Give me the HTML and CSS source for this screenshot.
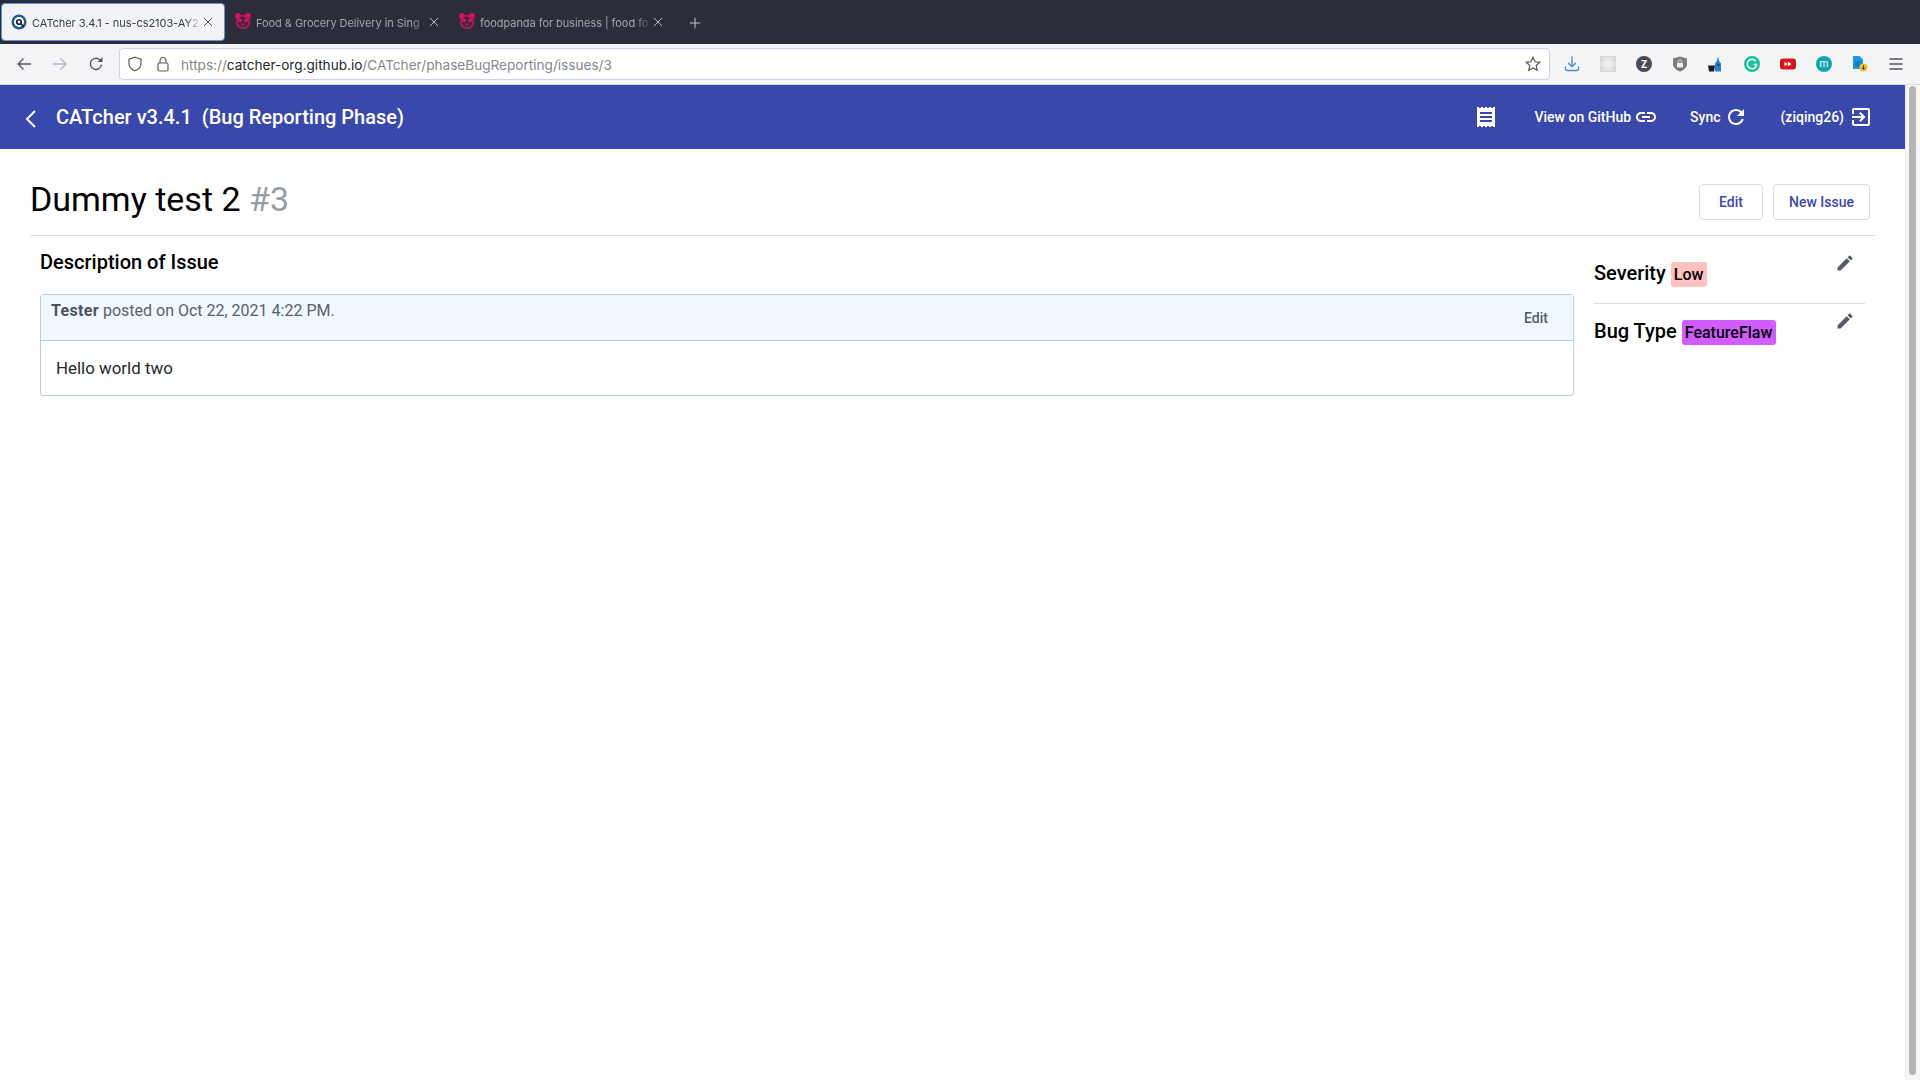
FILE: index.html
```html
<!DOCTYPE html>
<html lang="en">
<head>
  <meta charset="UTF-8" />
  <title>CATcher 3.4.1 - nus-cs2103-AY2122S1</title>
  <link rel="stylesheet" href="styles.css">
</head>
<body>

  <!-- Browser tabs -->
  <div class="tabstrip">
    <div class="tab tab-active">
      <svg class="favicon" viewBox="0 0 16 16"><circle cx="8" cy="8" r="7.5" fill="#1f5f8b"/><circle cx="8" cy="8" r="5" fill="#fff"/><circle cx="8" cy="8" r="3.1" fill="#16202c"/><circle cx="8" cy="8" r="1.4" fill="#fff"/><path d="M10 10l3 3" stroke="#16202c" stroke-width="1.6"/></svg>
      <span class="tab-title">CATcher 3.4.1 - nus-cs2103-AY2</span>
      <svg class="tab-close" viewBox="0 0 12 12"><path d="M2 2l8 8M10 2l-8 8"/></svg>
    </div>
    <div class="tab">
      <svg class="favicon favicon-panda" viewBox="0 0 16 16"><use href="#panda"/></svg>
      <span class="tab-title">Food &amp; Grocery Delivery in Sing</span>
      <svg class="tab-close" viewBox="0 0 12 12"><path d="M2 2l8 8M10 2l-8 8"/></svg>
    </div>
    <div class="tab">
      <svg class="favicon favicon-panda" viewBox="0 0 16 16"><use href="#panda"/></svg>
      <span class="tab-title">foodpanda for business | food fo</span>
      <svg class="tab-close" viewBox="0 0 12 12"><path d="M2 2l8 8M10 2l-8 8"/></svg>
    </div>
    <svg class="new-tab" viewBox="0 0 14 14"><path d="M7 1v12M1 7h12"/></svg>
  </div>

  <!-- Browser toolbar -->
  <div class="toolbar">
    <svg class="nav-icon nav-back" viewBox="0 0 16 16"><path d="M15 8H2M7.5 2.5L2 8l5.500 5.500"/></svg>
    <svg class="nav-icon nav-forward" viewBox="0 0 16 16"><path d="M1 8h13M8.500 2.500L14 8l-5.500 5.500"/></svg>
    <svg class="nav-icon nav-reload" viewBox="0 0 16 16"><path d="M13.500 8.500A5.600 5.600 0 1 1 11.800 3.800"/><path class="solid" d="M14.500 1v5h-5z"/></svg>
    <div class="urlbar">
      <svg class="url-icon" viewBox="0 0 16 16"><path d="M8 1.200l6 1.900v4.400c0 3.600-2.500 6-6 7.300-3.500-1.300-6-3.700-6-7.300V3.100z"/></svg>
      <svg class="url-icon" viewBox="0 0 16 16"><rect x="3" y="7" width="10" height="8" rx="1.500"/><path d="M5 7V4.500a3 3 0 0 1 6 0V7"/></svg>
      <span class="url"><span class="url-dim">https://</span>catcher-org.github.io<span class="url-dim">/CATcher/phaseBugReporting/issues/3</span></span>
      <svg class="url-star" viewBox="0 0 16 16"><path d="M8 1.300l2 4.500 4.800.5-3.600 3.200 1 4.800L8 11.900l-4.200 2.400 1-4.800L1.200 6.300 6 5.800z"/></svg>
    </div>
    <div class="extensions">
      <svg class="ext" viewBox="0 0 16 16" fill="none" stroke="#4a8ce8" stroke-width="1.400" stroke-linecap="round"><path d="M8 1v9.500M4.500 7.200L8 10.700l3.500-3.500M1.500 11v1.500a2 2 0 0 0 2 2h9a2 2 0 0 0 2-2V11"/></svg>
      <svg class="ext" viewBox="0 0 16 16"><rect width="16" height="16" fill="#d9d9d9"/><g fill="none" stroke="#f4f4f4" stroke-width="1"><ellipse cx="8" cy="8" rx="6.500" ry="2.600"/><ellipse cx="8" cy="8" rx="6.500" ry="2.600" transform="rotate(60 8 8)"/><ellipse cx="8" cy="8" rx="6.500" ry="2.600" transform="rotate(120 8 8)"/></g><circle cx="8" cy="8" r="1.400" fill="#f4f4f4"/></svg>
      <svg class="ext" viewBox="0 0 16 16"><circle cx="8" cy="8" r="8" fill="#4a4a55"/><text x="8" y="11.600" class="ext-letter">Z</text></svg>
      <svg class="ext" viewBox="0 0 16 16"><path d="M8 .5l7 2v5.500c0 3.500-3 6.300-7 7.500-4-1.200-7-4-7-7.500V2.500z" fill="#7b7b7b"/><rect x="5" y="7" width="6" height="4.500" rx=".6" fill="#eee"/><path d="M6.200 7V5.600a1.800 1.800 0 0 1 3.600 0V7" fill="none" stroke="#eee"/></svg>
      <svg class="ext" viewBox="0 0 16 16"><path d="M0 9.500h7l-1 6H1z" fill="#1b1b1b"/><path d="M7 15.500V7.500l1.800-2.500L10 .5l1.200 4.500 1.800 2.500v8z" fill="#2c7fd0"/><rect x="9" y="8" width="2.500" height="2" fill="#15476f"/></svg>
      <svg class="ext" viewBox="0 0 16 16"><circle cx="8" cy="8" r="8" fill="#15c39a"/><path d="M11.800 5.200A4.700 4.700 0 1 0 12.700 8.500H9.500" fill="none" stroke="#fff" stroke-width="1.500"/></svg>
      <svg class="ext" viewBox="0 0 16 16"><rect y="2.500" width="16" height="11" rx="3" fill="#d9161c"/><path d="M4.500 5.700L8 8l-3.500 2.300zM8 5.700L11.500 8 8 10.300z" fill="#fff"/></svg>
      <svg class="ext" viewBox="0 0 16 16"><circle cx="8" cy="8" r="8" fill="#10a5ad"/><text x="8" y="11.400" class="ext-letter ext-letter-thin">m</text></svg>
      <svg class="ext" viewBox="0 0 16 16"><path d="M1 0h6.500L11 3.500V13H1z" fill="#1e96e8"/><path d="M3 6h6M3 8h6M3 10h4" stroke="#0c5f9e" stroke-width="1"/><circle cx="11.500" cy="11.500" r="4" fill="#f5c518"/><path d="M11.500 9v4M9.800 11.500l1.700 1.800 1.700-1.800" fill="none" stroke="#333" stroke-width="1"/></svg>
      <svg class="ext ext-menu" viewBox="0 0 16 16"><path d="M1.500 3h13M1.500 8h13M1.500 13h13"/></svg>
    </div>
  </div>

  <div class="viewport">
    <div class="page">

      <!-- App header -->
      <header class="app-header">
        <svg class="back-icon" viewBox="0 0 12 20"><path d="M10 2L2 10l8 8"/></svg>
        <span class="app-title">CATcher v3.4.1 &nbsp;(Bug Reporting Phase)</span>
        <div class="header-actions">
          <svg class="log-icon" viewBox="0 0 18 20"><path d="M0 1h18v18H0z" fill="#fff"/><path d="M0 .5h18M0 19.500h18" stroke="#fff" stroke-width="1" stroke-dasharray="2 2"/><path d="M3 6h12M3 10h12M3 14h12" stroke="#3949ab" stroke-width="2"/></svg>
          <span class="header-link link-github">View on GitHub
            <svg class="header-icon" viewBox="0 0 24 24"><path d="M3.900 12c0-1.710 1.390-3.100 3.100-3.100h4V7H7c-2.760 0-5 2.240-5 5s2.240 5 5 5h4v-1.900H7c-1.710 0-3.100-1.390-3.100-3.100zM8 13h8v-2H8v2zm9-6h-4v1.900h4c1.710 0 3.100 1.390 3.100 3.100s-1.390 3.100-3.100 3.100h-4V17h4c2.760 0 5-2.240 5-5s-2.240-5-5-5z"/></svg>
          </span>
          <span class="header-link link-sync">Sync
            <svg class="header-icon" viewBox="0 0 24 24"><path d="M17.650 6.350C16.200 4.900 14.210 4 12 4c-4.420 0-7.990 3.580-7.990 8s3.570 8 7.990 8c3.730 0 6.840-2.550 7.730-6h-2.080c-.82 2.330-3.040 4-5.650 4-3.310 0-6-2.690-6-6s2.690-6 6-6c1.660 0 3.140.69 4.220 1.780L13 11h7V4l-2.350 2.350z"/></svg>
          </span>
          <span class="header-link link-user">(ziqing26)
            <svg class="header-icon" viewBox="0 0 24 24"><path d="M10.090 15.590L11.500 17l5-5-5-5-1.410 1.410L12.670 11H3v2h9.670l-2.580 2.590zM19 3H5c-1.110 0-2 .9-2 2v4h2V5h14v14H5v-4H3v4c0 1.100.89 2 2 2h14c1.100 0 2-.9 2-2V5c0-1.100-.9-2-2-2z"/></svg>
          </span>
        </div>
      </header>

      <main class="issue">
        <div class="issue-head">
          <h1 class="issue-title">Dummy test 2 <span class="issue-number">#3</span></h1>
          <div class="issue-buttons">
            <button class="stroked-btn btn-edit">Edit</button>
            <button class="stroked-btn btn-new">New Issue</button>
          </div>
        </div>

        <div class="issue-body">
          <section class="description">
            <h2 class="section-title">Description of Issue</h2>
            <div class="comment">
              <div class="comment-head">
                <span class="comment-meta"><strong>Tester</strong> posted on Oct 22, 2021 4:22 PM.</span>
                <button class="comment-edit">Edit</button>
              </div>
              <div class="comment-text">Hello world two</div>
            </div>
          </section>

          <aside class="sidebar">
            <div class="side-row">
              <div class="side-label">Severity <span class="chip chip-low">Low</span></div>
              <svg class="pencil" viewBox="0 0 24 24"><path d="M3 17.250V21h3.750L17.810 9.940l-3.750-3.750L3 17.250zM20.710 7.040c.39-.39.39-1.020 0-1.410l-2.340-2.340c-.39-.39-1.020-.39-1.410 0l-1.830 1.830 3.750 3.750 1.830-1.830z"/></svg>
            </div>
            <div class="side-row">
              <div class="side-label">Bug Type <span class="chip chip-flaw">FeatureFlaw</span></div>
              <svg class="pencil" viewBox="0 0 24 24"><path d="M3 17.250V21h3.750L17.810 9.940l-3.750-3.750L3 17.250zM20.710 7.040c.39-.39.39-1.020 0-1.410l-2.340-2.340c-.39-.39-1.020-.39-1.410 0l-1.830 1.830 3.750 3.750 1.830-1.830z"/></svg>
            </div>
          </aside>
        </div>
      </main>
    </div>

    <div class="scrolltrack"><div class="scrollthumb"></div></div>
  </div>

  <svg class="defs" width="0" height="0">
    <symbol id="panda" viewBox="0 0 16 16">
      <circle cx="3" cy="3" r="3" fill="#d70f64"/><circle cx="13" cy="3" r="3" fill="#d70f64"/>
      <circle cx="8" cy="9" r="6.200" fill="#2b2e38" stroke="#d70f64" stroke-width="1.500"/>
      <ellipse cx="5" cy="7.500" rx="2.200" ry="2" fill="#d70f64"/><ellipse cx="11" cy="7.500" rx="2.200" ry="2" fill="#d70f64"/>
      <path d="M5.800 10.500h4.400L8 13.500z" fill="#d70f64"/>
    </symbol>
  </svg>
</body>
</html>
```

FILE: styles.css
```css
html, body {
  height: 100%;
  margin: 0;
  padding: 0;
  overflow: hidden;
  background: #fff;
  font-family: Roboto, "Liberation Sans", sans-serif;
  color: #000;
}

body {
  display: flex;
  flex-direction: column;
}

.defs {
  position: absolute;
}

/* Browser tabs */
.tabstrip {
  height: 44px;
  flex: none;
  display: flex;
  align-items: center;
  padding-left: 1px;
  box-sizing: border-box;
  background: #2b2e38;
  font-family: Inter, "Noto Sans", sans-serif;
}

.tab {
  width: 224px;
  height: 38px;
  box-sizing: border-box;
  display: flex;
  align-items: center;
  padding: 0 10px 0 9px;
  border-radius: 4px;
  color: #a4a6ad;
  font-size: 11px;
  letter-spacing: -.05px;
}

.tab-active {
  background: #f2f3f6;
  border: 1px solid #5b93d6;
  color: #3a3d46;
  margin-right: 1px;
}

.favicon {
  width: 16px;
  height: 16px;
  flex: none;
  margin-right: 5px;
}

.favicon-panda {
  margin-top: -2px;
}

.tab-title {
  flex: 1;
  min-width: 0;
  padding-top: 1px;
  white-space: nowrap;
  -webkit-mask-image: linear-gradient(to right, #000 90%, transparent);
  mask-image: linear-gradient(to right, #000 90%, transparent);
}

.tab-close {
  width: 12px;
  height: 12px;
  flex: none;
  fill: none;
  stroke: #b8bac0;
  stroke-width: 1;
}

.tab-active .tab-close {
  stroke: #4c4f58;
}

.new-tab {
  width: 12px;
  height: 12px;
  margin: 1px 0 0 15px;
  fill: none;
  stroke: #c4c6cb;
  stroke-width: 1.2;
}

/* Browser toolbar */
.toolbar {
  height: 41px;
  flex: none;
  display: flex;
  align-items: center;
  box-sizing: border-box;
  padding: 0 0 1px 16px;
  background: #f3f4f6;
  border-bottom: 1px solid #dcdde2;
  font-family: Inter, "Noto Sans", sans-serif;
}

.nav-icon {
  width: 16px;
  height: 16px;
  flex: none;
  fill: none;
  stroke: #54565e;
  stroke-width: 1.300;
  margin-right: 20px;
}

.nav-forward {
  stroke: #b4b6bb;
}

.nav-reload {
  margin-right: 15px;
}

.nav-icon .solid {
  fill: #54565e;
  stroke: none;
}

.urlbar {
  width: 1431px;
  height: 32px;
  flex: none;
  box-sizing: border-box;
  display: flex;
  align-items: center;
  padding: 0 8px 0 7px;
  background: #fff;
  border: 1px solid #c9d2e8;
  border-radius: 4px;
}

.url-icon {
  width: 16px;
  height: 16px;
  flex: none;
  fill: none;
  stroke: #5a5c64;
  stroke-width: 1.200;
  margin-right: 12px;
}

.url {
  flex: 1;
  margin-left: -2px;
  padding-top: 2px;
  font-size: 13.600px;
  color: #24262c;
  white-space: nowrap;
}

.url-dim {
  color: #85878e;
}

.url-star {
  width: 16px;
  height: 16px;
  fill: none;
  stroke: #54565e;
  stroke-width: 1.200;
}

.extensions {
  display: flex;
  align-items: center;
  gap: 20px;
  margin-left: 14px;
}

.ext {
  width: 16px;
  height: 16px;
  flex: none;
}

.ext-letter {
  fill: #fff;
  font-family: Roboto, sans-serif;
  font-size: 10px;
  font-weight: 700;
  text-anchor: middle;
}

.ext-letter-thin {
  font-weight: 400;
}

.ext-menu {
  fill: none;
  stroke: #54565e;
  stroke-width: 1.300;
}

/* Page area */
.viewport {
  flex: 1;
  display: flex;
  min-height: 0;
}

.page {
  flex: 1;
  min-width: 0;
}

.scrolltrack {
  width: 15px;
  flex: none;
  box-sizing: border-box;
  padding: 1px 4px 5px 3px;
  background: #f7f7f7;
  border-left: 1px solid #eaeaea;
}

.scrollthumb {
  height: 100%;
  background: #b5b5b5;
  border-radius: 4px;
}

/* App header */
.app-header {
  height: 64px;
  display: flex;
  align-items: center;
  padding: 0 32px 0 25px;
  box-sizing: border-box;
  background: #3949ab;
  color: #fff;
}

.back-icon {
  width: 12px;
  height: 20px;
  margin: 4px 19px 0 0;
  fill: none;
  stroke: #fff;
  stroke-width: 2;
}

.app-title {
  font-size: 20px;
  font-weight: 500;
}

.header-actions {
  margin-left: auto;
  display: flex;
  align-items: center;
}

.log-icon {
  width: 18px;
  height: 20px;
  margin-right: 40px;
}

.header-link {
  display: flex;
  align-items: center;
  font-size: 14px;
  font-weight: 500;
}

.link-github {
  gap: 3px;
  margin-right: 32px;
}

.link-sync {
  gap: 3px;
  margin-right: 33px;
}

.link-user {
  gap: 5px;
}

.header-icon {
  width: 24px;
  height: 24px;
  fill: #fff;
}

/* Issue */
.issue {
  padding: 0 30px;
}

.issue-head {
  height: 87px;
  box-sizing: border-box;
  display: flex;
  align-items: flex-end;
  justify-content: space-between;
  padding: 0 5px 15px 0;
  border-bottom: 1px solid #dcdcdc;
}

.issue-title {
  margin: 0 0 1px;
  font-size: 34px;
  font-weight: 400;
}

.issue-number {
  color: #959da5;
  font-weight: 400;
}

.issue-buttons {
  display: flex;
  gap: 10px;
}

.stroked-btn {
  height: 36px;
  padding: 0 15px;
  background: #fff;
  border: 1px solid #dcdcdc;
  border-radius: 4px;
  font-family: Roboto, sans-serif;
  font-size: 14px;
  font-weight: 500;
  color: #3949ab;
}

.btn-edit {
  width: 64px;
}

.btn-new {
  width: 97px;
}

.issue-body {
  display: flex;
  padding: 0 10px;
}

.description {
  flex: 1;
  min-width: 0;
}

.section-title {
  margin: 13px 0 19px;
  font-size: 20px;
  font-weight: 500;
  line-height: 26px;
}

.comment {
  border: 1px solid #b5cde8;
  border-radius: 3px;
}

.comment-head {
  height: 46px;
  box-sizing: border-box;
  display: flex;
  justify-content: space-between;
  padding: 6px 25px 0 10px;
  background: #f1f8ff;
  border-bottom: 1px solid #b5cde8;
  color: #586069;
  font-size: 16px;
}

.comment-meta strong {
  font-weight: 700;
  color: #4c545c;
  letter-spacing: .33px;
}

.comment-edit {
  height: 24px;
  padding: 0;
  margin-top: 5px;
  background: none;
  border: none;
  font-family: Roboto, sans-serif;
  font-size: 14px;
  font-weight: 500;
  color: #565c66;
}

.comment-text {
  height: 54px;
  box-sizing: border-box;
  padding: 17px 15px 0;
  font-size: 16.900px;
  color: #24292e;
}

.sidebar {
  width: 271px;
  flex: none;
  margin-left: 20px;
  padding-top: 9px;
}

.side-row {
  height: 59px;
  box-sizing: border-box;
  display: flex;
  justify-content: space-between;
  border-bottom: 1px solid #dcdcdc;
}

.side-row:last-child {
  border-bottom: none;
}

.side-label {
  padding-top: 15px;
  font-size: 20px;
  font-weight: 500;
  line-height: 26px;
}

.side-row:last-child .side-label {
  padding-top: 14px;
}

.chip {
  display: inline-block;
  padding: 0 4px 0 3px;
  border-radius: 3px;
  font-size: 16px;
  font-weight: 500;
  line-height: 25px;
}

.chip-low {
  background: #ffc0c0;
}

.chip-flaw {
  background: #d15cff;
}

.pencil {
  width: 20px;
  height: 20px;
  margin: 8px 10px 0 0;
  fill: #565c66;
}

.side-row:last-child .pencil {
  margin-top: 7px;
}
```
